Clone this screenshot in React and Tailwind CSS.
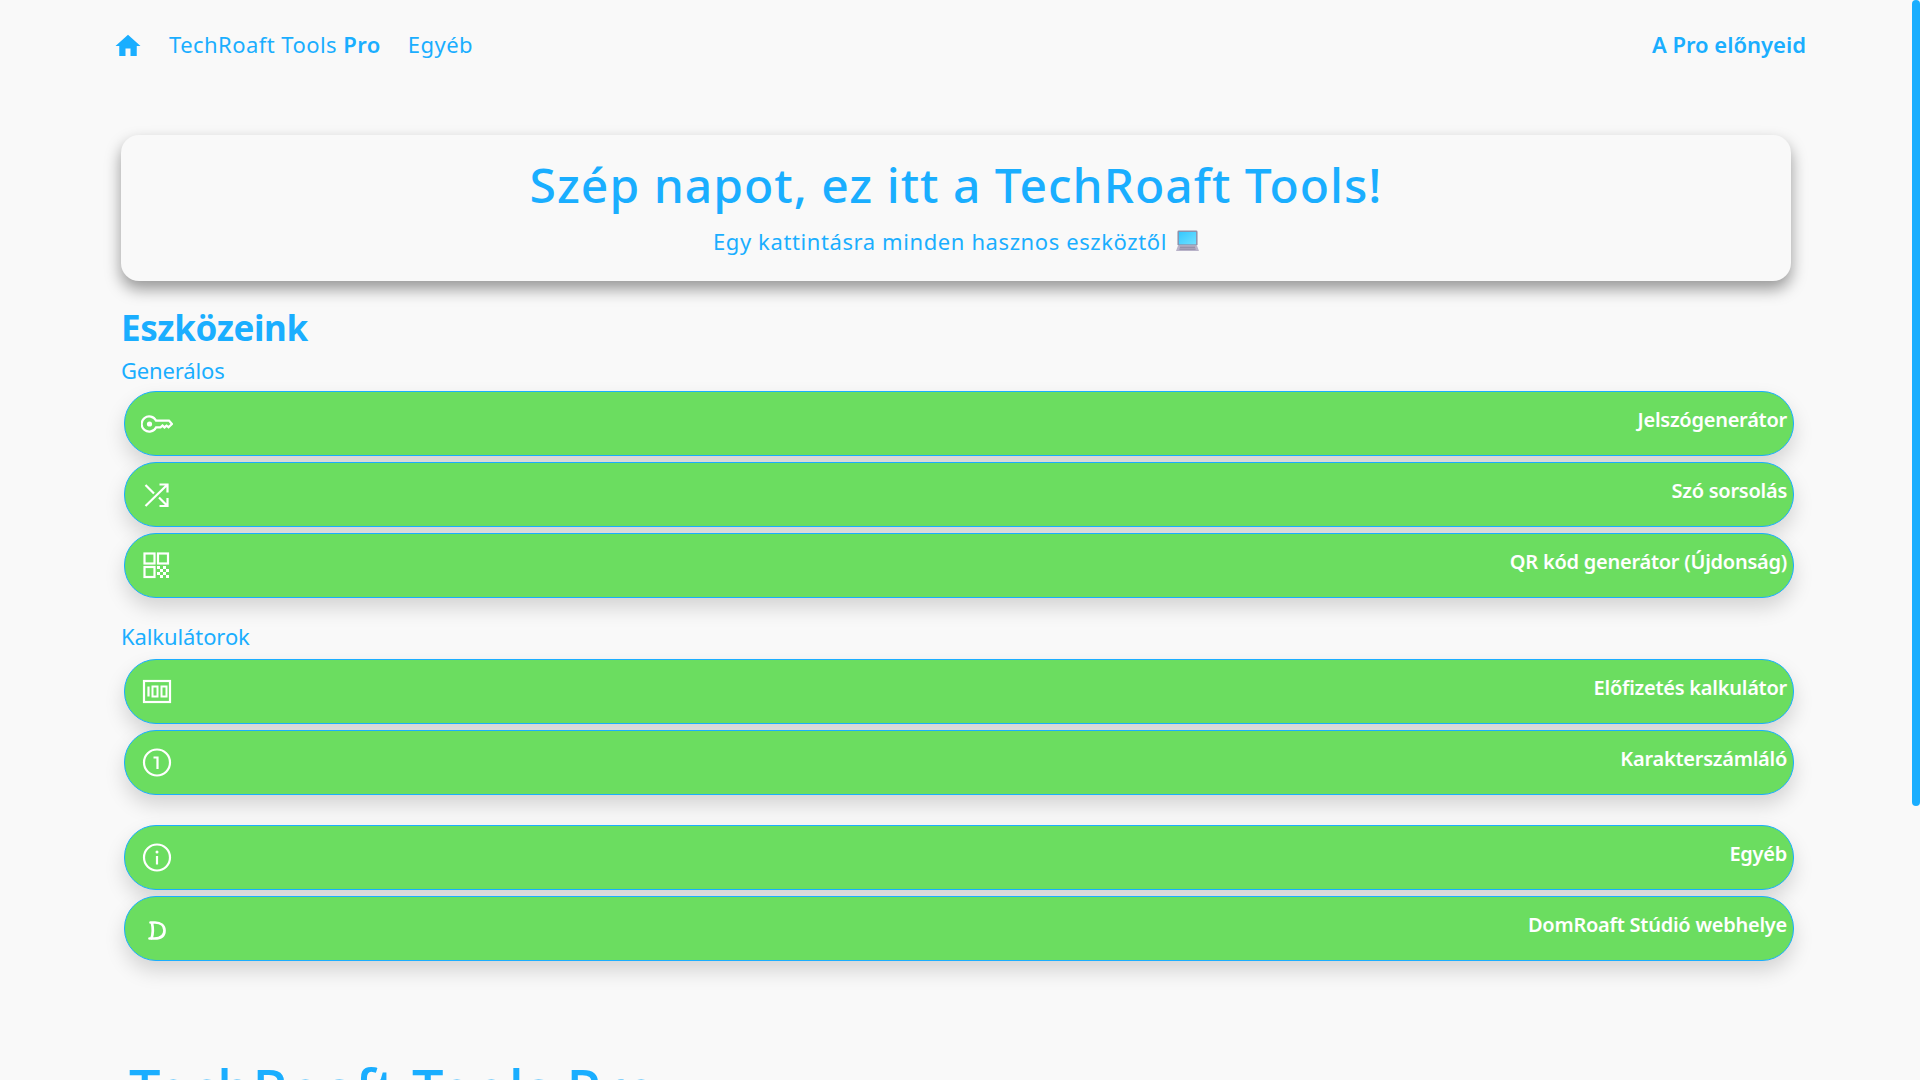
import React from "react";
import { MdHome } from "react-icons/md";

const Svg = ({ children }) => (
  <svg width="32" height="32" viewBox="0 0 32 32" fill="none" stroke="#fff" strokeWidth="2.2" className="block">
    {children}
  </svg>
);

const KeyIcon = () => (
  <Svg>
    <path d="M15 12.6A7.6 7.6 0 1 0 15 19.4H19.5L21.5 17.6L23.5 19.4L25.5 17.6L27.5 19.2L31 16L28 12.6Z" />
    <circle cx="8.5" cy="16" r="2.6" fill="#fff" stroke="none" />
  </Svg>
);
const ShuffleIcon = () => (
  <Svg>
    <path d="M4.5 27L26.5 5.5M18.5 5.5H26.5V13.5M4.5 6L13 14.5M18 18.5L26.5 27M18.5 27H26.5V19" />
  </Svg>
);
const QrIcon = () => (
  <Svg>
    <rect x="3.5" y="3.5" width="10" height="10" />
    <rect x="17" y="3.5" width="10" height="10" />
    <rect x="3.5" y="17" width="10" height="10" />
    <path
      d="M16 16h3v3h-3zM22 16h3v3h-3zM19 19h3v3h-3zM25 19h3v3h-3zM16 22h3v3h-3zM22 22h3v3h-3zM19 25h3v3h-3zM25 25h3v3h-3z"
      fill="#fff"
      stroke="none"
    />
  </Svg>
);
const HundredIcon = () => (
  <Svg>
    <rect x="3" y="5" width="26" height="21" />
    <path d="M7.5 10.5V20.5" />
    <rect x="11.5" y="10.5" width="5" height="10" strokeWidth="2" />
    <rect x="20.5" y="10.5" width="5" height="10" strokeWidth="2" />
  </Svg>
);
const OneIcon = () => (
  <Svg>
    <circle cx="16" cy="15.5" r="13" />
    <path d="M12.5 10.5H16.5V22" />
  </Svg>
);
const InfoIcon = () => (
  <Svg>
    <circle cx="16" cy="15.5" r="13" />
    <path d="M16 14V22.5" />
    <circle cx="16" cy="10" r="1.5" fill="#fff" stroke="none" />
  </Svg>
);
const DIcon = () => (
  <Svg>
    <path
      d="M9.5 9.5H14C20 9.5 23.5 12.8 23.5 17.5C23.5 22.8 19.5 25.5 13.5 25.5H8.5M11 10C12 14.5 12 21 10.5 25.5"
      strokeWidth="2.7"
      strokeLinecap="round"
    />
  </Svg>
);

const Pill = ({ icon, label }) => (
  <a className="ml-[3px] flex h-[65px] w-[1670px] items-start justify-between rounded-[32px] border border-[#1aaeff] bg-[#6bdd60] pl-[16px] pr-[6px] shadow-[0_10px_20px_rgba(0,0,0,0.15)]">
    <span className="mt-[16px]">{icon}</span>
    <span className="mt-[13px] text-[20px] font-semibold leading-[30px] tracking-[-0.25px] text-white">{label}</span>
  </a>
);

const Group = ({ children }) => <div className="flex flex-col gap-[6px]">{children}</div>;

const Laptop = () => (
  <svg width="23" height="22" viewBox="0 0 24 23" className="ml-[9px] inline-block">
    <defs>
      <linearGradient id="scr" x1="0" y1="0" x2="1" y2="1">
        <stop offset="0" stopColor="#35c8ff" />
        <stop offset="1" stopColor="#6fe0ff" />
      </linearGradient>
    </defs>
    <rect x="1.5" y="0.5" width="21" height="16" rx="1.5" fill="#8f8fa8" />
    <rect x="3" y="2" width="18" height="13" fill="url(#scr)" />
    <path d="M2 16.5H22L24 22H0Z" fill="#b9b3c9" />
    <path d="M4 18H20M3.5 20H20.5" stroke="#85829a" strokeWidth="1" />
  </svg>
);

export default function App() {
  return (
    <div className="relative h-screen overflow-hidden bg-[#f9f9f9] font-['Noto_Sans','Open_Sans',sans-serif] text-[#1aaeff]">
      <nav className="flex h-[88px] items-center justify-between pl-[113px] pr-[114px]">
        <div className="flex items-center">
          <MdHome className="mt-[4px] h-[30px] w-[30px]" />
          <span className="ml-[26px] text-[22px] leading-[30px] tracking-[0.45px]">
            TechRoaft Tools <b className="font-semibold">Pro</b>
          </span>
          <span className="ml-[27px] text-[22px] leading-[30px] tracking-[0.45px]">Egyéb</span>
        </div>
        <span className="text-[22px] font-semibold leading-[30px]">A Pro előnyeid</span>
      </nav>

      <main className="ml-[121px] w-[1670px]">
        <section className="mt-[47px] flex h-[146px] flex-col items-center rounded-[18px] bg-[#f9f9f9] shadow-[0_8px_16px_rgba(0,0,0,0.4)]">
          <h1 className="mt-[16px] text-[48px] font-medium leading-[68px] tracking-[1px]">Szép napot, ez itt a TechRoaft Tools!</h1>
          <p className="mt-[7px] flex items-center text-[22px] leading-[30px] tracking-[0.6px]">
            Egy kattintásra minden hasznos eszköztől
            <Laptop />
          </p>
        </section>

        <h2 className="mt-[25px] text-[35px] font-bold leading-[44px] tracking-[-0.4px]">Eszközeink</h2>
        <h3 className="mt-[5px] text-[22px] leading-[30px] tracking-[-0.15px]">Generálos</h3>
        <div className="mt-[6px]">
          <Group>
            <Pill icon={<KeyIcon />} label="Jelszógenerátor" />
            <Pill icon={<ShuffleIcon />} label="Szó sorsolás" />
            <Pill icon={<QrIcon />} label="QR kód generátor (Újdonság)" />
          </Group>
        </div>
        <h3 className="mt-[23px] text-[22px] leading-[30px] tracking-[-0.1px]">Kalkulátorok</h3>
        <div className="mt-[8px]">
          <Group>
            <Pill icon={<HundredIcon />} label="Előfizetés kalkulátor" />
            <Pill icon={<OneIcon />} label="Karakterszámláló" />
          </Group>
        </div>
        <div className="mt-[30px]">
          <Group>
            <Pill icon={<InfoIcon />} label="Egyéb" />
            <Pill icon={<DIcon />} label="DomRoaft Stúdió webhelye" />
          </Group>
        </div>
        <h2 className="ml-[8px] mt-[92px] text-[56px] font-medium leading-[70px] tracking-[0.3px]">TechRoaft Tools Pro</h2>
      </main>

      <div className="absolute right-0 top-0 h-[806px] w-[8px] rounded-[5px] bg-[#1aaeff]" />
    </div>
  );
}
